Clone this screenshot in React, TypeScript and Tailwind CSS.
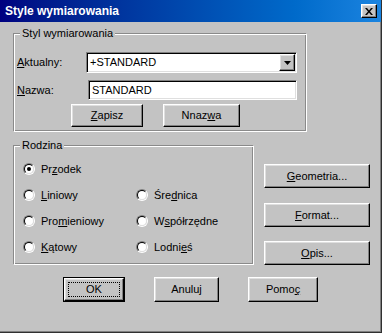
import { FC, ReactNode } from 'react';

const raised =
  'border border-t-white border-l-white border-r-black border-b-black shadow-[inset_-1px_-1px_0_#808080,inset_1px_1px_0_#dfdfdf]';
const sunken =
  'border border-t-[#808080] border-l-[#808080] border-r-white border-b-white shadow-[inset_1px_1px_0_#000,inset_-1px_-1px_0_#dfdfdf]';
const etched =
  'm-0 p-0 min-w-0 border border-t-[#8a8a8a] border-l-[#8a8a8a] border-r-white border-b-white shadow-[inset_1px_1px_0_#fff,inset_-1px_-1px_0_#8a8a8a]';

const U: FC<{ children: ReactNode }> = ({ children }) => (
  <u className="underline underline-offset-[1px]">{children}</u>
);

const Button: FC<{ className: string; children: ReactNode; isDefault?: boolean }> = ({
  className,
  children,
  isDefault,
}) =>
  isDefault ? (
    <div className={`border border-black bg-[#c3c3c3] ${className}`}>
      <div className={`${raised} w-full h-full p-[3px]`}>
        <div className="w-full h-full border border-dotted border-black flex items-center justify-center">
          {children}
        </div>
      </div>
    </div>
  ) : (
    <div className={`${raised} bg-[#c3c3c3] flex items-center justify-center ${className}`}>
      {children}
    </div>
  );

const Radio: FC<{ checked?: boolean; children: ReactNode }> = ({ checked, children }) => (
  <div className="flex items-center gap-[6px] h-[26px]">
    <div className="w-[12px] h-[12px] rounded-full border border-t-[#808080] border-l-[#808080] border-r-white border-b-white">
      <div className="w-full h-full rounded-full bg-white border border-t-black border-l-black border-r-[#dfdfdf] border-b-[#dfdfdf] flex items-center justify-center">
        {checked && <div className="w-[4px] h-[4px] rounded-full bg-black" />}
      </div>
    </div>
    <span>{children}</span>
  </div>
);

export default function App() {
  return (
    <div className="bg-white w-[386px] h-[336px] font-['Liberation_Sans',Arial,sans-serif] text-[11px] leading-[13px] text-black">
      <div className="w-[382px] h-[333px] bg-[#c3c3c3] border-r border-b border-[#303030] shadow-[inset_-1px_-1px_0_#808080] flex flex-col">
        {/* title bar */}
        <div className="h-[22px] shrink-0 bg-linear-to-r from-[#000080] to-[#1a84e0] flex items-center justify-between pl-[5px] pr-[4px]">
          <span className="text-white font-bold text-[12px] leading-[14px]">Style wymiarowania</span>
          <div className={`${raised} bg-[#c3c3c3] w-[16px] h-[14px] flex items-center justify-center`}>
            <svg width="8" height="7" viewBox="0 0 8 7">
              <path d="M0 0h2l2 2.5L6 0h2L5 3.5 8 7H6L4 4.5 2 7H0l3-3.5z" fill="#000" />
            </svg>
          </div>
        </div>

        {/* Styl wymiarowania */}
        <fieldset className={`${etched} ml-[13px] mt-[5px] w-[294px]`}>
          <legend className="ml-[6px] px-[2px] bg-[#c3c3c3]">Styl wymiarowania</legend>
          <div className="pt-[12px] pb-[4px] pl-[3px] flex flex-col">
            <div className="flex items-center h-[21px]">
              <span className="w-[69px]">
                <U>A</U>ktualny:
              </span>
              <div className={`${sunken} bg-white w-[211px] h-[21px] flex items-center pl-[3px] pr-[1px]`}>
                <span className="flex-1">+STANDARD</span>
                <div className={`${raised} bg-[#c3c3c3] w-[16px] h-[17px] flex items-center justify-center`}>
                  <svg width="7" height="4" viewBox="0 0 7 4">
                    <path d="M0 0h7L3.5 4z" fill="#000" />
                  </svg>
                </div>
              </div>
            </div>
            <div className="flex items-center h-[20px] mt-[7px]">
              <span className="w-[71px]">
                <U>N</U>azwa:
              </span>
              <div className={`${sunken} bg-white w-[209px] h-[20px] flex items-center pl-[3px]`}>
                STANDARD
              </div>
            </div>
            <div className="flex mt-[4px] pl-[54px] gap-[20px]">
              <Button className="w-[72px] h-[23px]">
                <span>
                  <U>Z</U>apisz
                </span>
              </Button>
              <Button className="w-[77px] h-[23px]">
                <span>
                  Nnaz<U>w</U>a
                </span>
              </Button>
            </div>
          </div>
        </fieldset>

        {/* Rodzina + side buttons */}
        <div className="flex mt-[7px] ml-[13px] gap-[10px]">
          <fieldset className={`${etched} w-[241px]`}>
            <legend className="ml-[6px] px-[2px] bg-[#c3c3c3]">Rodzina</legend>
            <div className="pt-[4px] pl-[9px] grid grid-cols-[113px_1fr]">
              <Radio checked>
                Pr<U>z</U>odek
              </Radio>
              <div />
              <Radio>
                <U>L</U>iniowy
              </Radio>
              <Radio>
                Śre<U>d</U>nica
              </Radio>
              <Radio>
                Pro<U>m</U>ieniowy
              </Radio>
              <Radio>
                W<U>s</U>półrzędne
              </Radio>
              <Radio>
                <U>K</U>ątowy
              </Radio>
              <Radio>
                Lodni<U>e</U>ś
              </Radio>
            </div>
          </fieldset>
          <div className="flex flex-col pt-[25px]">
            <Button className="w-[106px] h-[24px]">
              <span>
                <U>G</U>eometria...
              </span>
            </Button>
            <Button className="w-[106px] h-[24px] mt-[15px]">
              <span>
                <U>F</U>ormat...
              </span>
            </Button>
            <Button className="w-[106px] h-[24px] mt-[14px]">
              <span>
                <U>O</U>pis...
              </span>
            </Button>
          </div>
        </div>

        {/* bottom buttons */}
        <div className="flex mt-[12px] ml-[63px]">
          <Button isDefault className="w-[62px] h-[25px]">
            <span>OK</span>
          </Button>
          <Button className="w-[65px] h-[25px] ml-[29px]">
            <span>Anuluj</span>
          </Button>
          <Button className="w-[70px] h-[25px] ml-[29px]">
            <span>
              Pomo<U>ç</U>
            </span>
          </Button>
        </div>
      </div>
    </div>
  );
}
